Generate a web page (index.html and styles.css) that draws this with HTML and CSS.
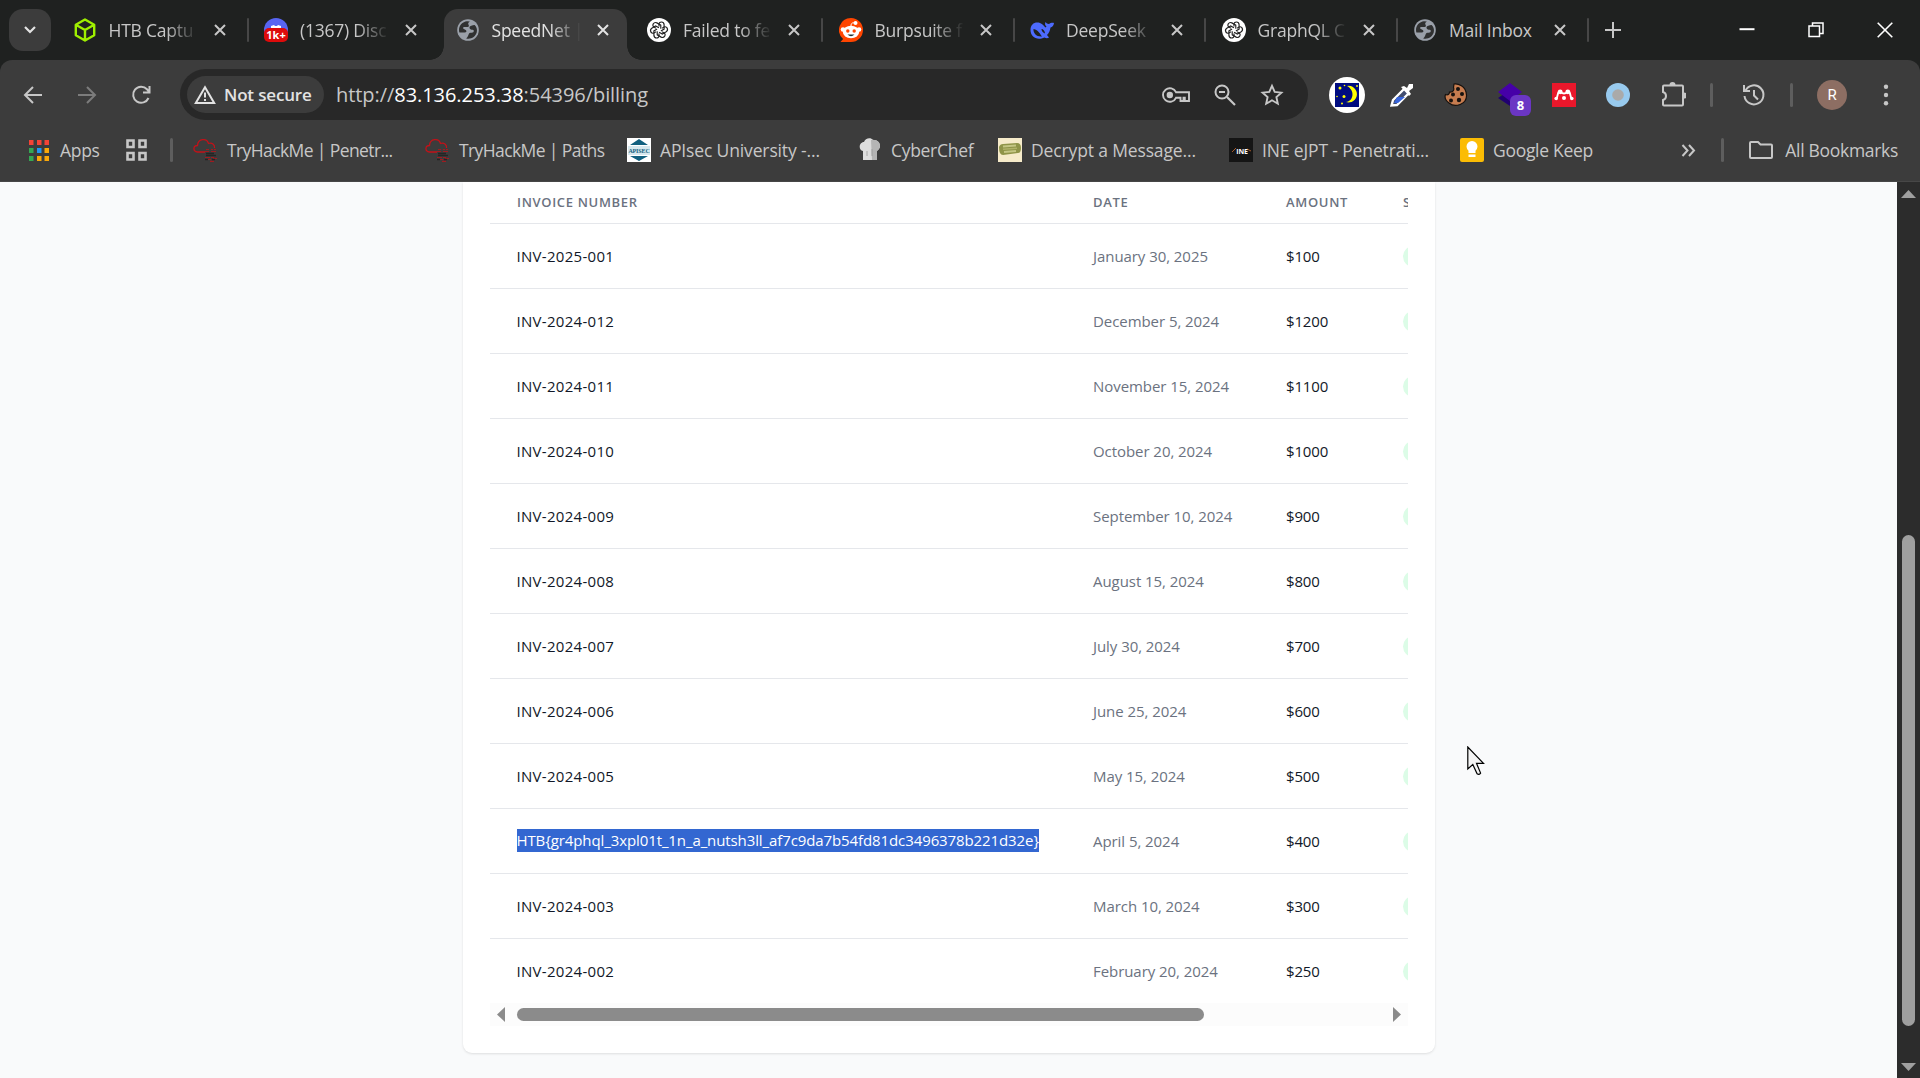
FILE: index.html
```html
<!DOCTYPE html>
<html lang="en">
<head>
<meta charset="utf-8">
<title>SpeedNet Billing</title>
<link rel="stylesheet" href="styles.css">
</head>
<body>
<svg width="0" height="0" class="defs" aria-hidden="true">
  <symbol id="close" viewBox="0 0 12 12"><path d="M1 1 11 11M11 1 1 11" fill="none" stroke="currentColor" stroke-width="2"/></symbol>
  <symbol id="globe" viewBox="0 0 22 22"><circle cx="11" cy="11" r="10.8" fill="#9aa0a9"/><path d="M10 2.2C5.5 2.6 2 6.400 2 11c0 1 .1 1.800.4 2.500h5.300c1.800 0 2.300-1.500 1-2.500l-2.200-1.300c-.8-.7-.4-1.800.8-1.700h3.300c1.500 0 1.500-1.200 1-2.200-.8-1.300-.5-2.300 1.300-3.400zM15 6.500c-2 .4-3 1.600-2.300 3 .5 1 1.600 1.200 3 1.200.8 0 1.300.8 1 1.800-.3 1.200-1.700 1.200-3.200 1.300-1.600.2-1.700 1.700-2.500 3.100-.3.700-1 1.600-1.800 2.500 4.600 1.200 9.500-1.700 10.600-6.200.8-3-.6-5.700-2.200-7.200-.9-.3-1.700.2-2.600.5z" fill="#303131"/></symbol>
  <symbol id="gpt" viewBox="0 0 24 24"><circle cx="12" cy="12" r="12" fill="#fff"/><g fill="none" stroke="#222" stroke-width="1.15"><path id="petal" d="M12 8.400V6.200c0-3 4.800-3 5.100.4v4.500l-3.200 1.900"/><use href="#petal" transform="rotate(60 12 12)"/><use href="#petal" transform="rotate(120 12 12)"/><use href="#petal" transform="rotate(180 12 12)"/><use href="#petal" transform="rotate(240 12 12)"/><use href="#petal" transform="rotate(300 12 12)"/></g></symbol>
  <symbol id="thm" viewBox="0 0 24 24"><path d="M12 14H4.500C-.5 13.500 0 7.500 4.500 7.500 5 0 14 0 15.500 5.500c3.500-1 6.500 1 6 4.500" fill="none" stroke="#c21219" stroke-width="1.300"/><path d="M13 11.500h3m2 0h2m1 0h2M12 13.500h4m2 0h5M15 21.500h3m2-1h4M12 19.500h5m1 0h3M17 23.300h4" stroke="#a01b20" stroke-width="1.200"/><path d="M13 15.500h8M13 17.500h10M12 21.500h3m4 0h3" stroke="#252525" stroke-width="1.500"/></symbol>
</svg>

<header class="browser">
  <div class="tabstrip">
    <div class="tab-search"><svg width="14" height="10" viewBox="0 0 14 10"><path d="M2 2l5 5 5-5" fill="none" stroke="#e3e3e3" stroke-width="2.200"/></svg></div>
    <nav class="tabs">
      <div class="tab divided"><svg class="fav" viewBox="0 0 24 24"><path d="M12 1.500 21.200 6.700v10.600L12 22.500 2.800 17.300V6.700zM2.800 6.700 12 12l9.200-5.300M12 12v10.500" fill="none" stroke="#9fef00" stroke-width="2.400" stroke-linejoin="round"/></svg><span class="label">HTB Captu</span><svg class="x"><use href="#close"/></svg></div>
      <div class="tab"><svg class="fav" viewBox="0 0 24 24"><circle cx="12" cy="12" r="12" fill="#5865f2"/><path d="M7 11V8l3-1 1 1h2l1-1 3 1v3z" fill="#fff"/><rect y="10" width="24" height="14" rx="5" fill="#dd0b0b"/><text x="12" y="21" text-anchor="middle" class="badge-text">1k+</text></svg><span class="label">(1367) Disc</span><svg class="x"><use href="#close"/></svg></div>
      <div class="tab active"><svg class="fav" viewBox="-1 -1 24 24"><use href="#globe" width="22" height="22"/></svg><span class="label">SpeedNet |</span><svg class="x"><use href="#close"/></svg></div>
      <div class="tab divided"><svg class="fav"><use href="#gpt"/></svg><span class="label">Failed to fe</span><svg class="x"><use href="#close"/></svg></div>
      <div class="tab divided"><svg class="fav" viewBox="0 0 24 24"><path d="M12 0a12 12 0 1 1 0 24H1.500l2.600-3A12 12 0 0 1 12 0z" fill="#ff4500"/><g fill="#fff"><ellipse cx="12" cy="14" rx="8.200" ry="6.200"/><circle cx="4" cy="11.500" r="2.300"/><circle cx="20" cy="11.500" r="2.300"/><circle cx="16.500" cy="5" r="2"/></g><path d="M12 8c0-3 1.500-3.500 3.500-3" fill="none" stroke="#fff" stroke-width="1"/><g fill="#ff4500"><circle cx="8.800" cy="13" r="1.700"/><circle cx="15.200" cy="13" r="1.700"/></g><path d="M8.500 16.500h7q-3.500 3.500-7 0z" fill="#233"/></svg><span class="label">Burpsuite f</span><svg class="x"><use href="#close"/></svg></div>
      <div class="tab divided"><svg class="fav" viewBox="0 0 24 24"><path d="M.5 12C.5 6 5 3.500 10 5c3 1 3.500 3 5.500 4.500l1-1c-1.700-1-1.700-3-1-4.500.8 1.400 2 1.800 3.500 2 1.200-.8 3-1.400 5-1-.3 2.500-1.500 4-3.500 4.500-.5 3-1.500 5.500-3.500 7.500l2 2.500c-1.500 1-3 .8-4.500-.1C7 23 .5 19 .5 12zm3-1c-.5 4 3 8 8.500 7.500-1.500-1.500-3.500-7-8.500-7.500zm8 0c0 2 1.500 3.500 3.500 4.500 0-2-1.500-4.500-3.500-4.500z" fill="#4d6bfe" fill-rule="evenodd"/></svg><span class="label">DeepSeek</span><svg class="x"><use href="#close"/></svg></div>
      <div class="tab divided"><svg class="fav"><use href="#gpt"/></svg><span class="label">GraphQL C</span><svg class="x"><use href="#close"/></svg></div>
      <div class="tab divided"><svg class="fav" viewBox="-1 -1 24 24"><use href="#globe" width="22" height="22"/></svg><span class="label whole">Mail Inbox</span><svg class="x"><use href="#close"/></svg></div>
    </nav>
    <svg class="new-tab" viewBox="0 0 16 16"><path d="M8 0v16M0 8h16" stroke="#c7c7c7" stroke-width="2"/></svg>
    <div class="window-controls">
      <svg width="16" height="16" viewBox="0 0 16 16"><path d="M.5 7.200h15" stroke="#fff" stroke-width="2"/></svg>
      <svg width="16" height="16" viewBox="0 0 16 16"><path d="M1 4h10.500v10.500H1zM4.500 4V1H15v10.500h-3.500" fill="none" stroke="#fff" stroke-width="1.500"/></svg>
      <svg width="16" height="16" viewBox="0 0 16 16"><path d="M.7.700l14.600 14.600M15.300.7.700 15.300" stroke="#fff" stroke-width="1.600"/></svg>
    </div>
  </div>

  <div class="toolbar">
    <div class="nav-buttons">
      <svg width="20" height="20" viewBox="0 0 20 20"><path d="M19 10H2M10 2 2 10l8 8" fill="none" stroke="#c7c7c7" stroke-width="2"/></svg>
      <svg width="20" height="20" viewBox="0 0 20 20"><path d="M1 10h17M10 2l8 8-8 8" fill="none" stroke="#7c7c7c" stroke-width="2"/></svg>
      <svg width="20" height="20" viewBox="0 0 20 20"><path d="M17.500 13A8 8 0 1 1 16 4.300L18 6.500M18.500 1v6.500H12" fill="none" stroke="#c7c7c7" stroke-width="2"/></svg>
    </div>
    <div class="omnibox">
      <div class="security"><svg width="22" height="20" viewBox="0 0 22 20"><path d="M11 2.200 20.200 18H1.800z" fill="none" stroke="#e3e3e3" stroke-width="2"/><path d="M11 7.500v5M11 14v2" stroke="#e3e3e3" stroke-width="2"/></svg><span>Not secure</span></div>
      <div class="url">http://<b>83.136.253.38</b>:54396/billing</div>
      <div class="page-actions">
        <svg width="28" height="18" viewBox="0 0 28 18"><path d="M14 6.200A6.800 6.800 0 1 0 14 11.800h4.500V15h3v-3.200h1.300V15H27V6.200z" fill="none" stroke="#c7c7c7" stroke-width="1.900"/><circle cx="7.800" cy="9" r="3.200" fill="#c7c7c7"/></svg>
        <svg width="22" height="22" viewBox="0 0 22 22"><circle cx="8" cy="8" r="6.500" fill="none" stroke="#c7c7c7" stroke-width="2"/><path d="M5 8h6M13 13l8 8" stroke="#c7c7c7" stroke-width="2.200"/></svg>
        <svg width="24" height="24" viewBox="0 0 24 24"><path d="M12 2.800l2.700 6.100 6.700.7-5 4.500 1.400 6.600L12 17.300l-5.800 3.400 1.400-6.600-5-4.500 6.700-.7z" fill="none" stroke="#c7c7c7" stroke-width="1.900"/></svg>
      </div>
    </div>
    <div class="extensions">
      <svg class="moon" viewBox="0 0 36 36"><circle cx="18" cy="18" r="18" fill="#fff"/><path d="M6 6h24v24H6z" fill="#000c80"/><path d="M18 9a8.300 8.300 0 1 1-1 16c8-1 9-12 1-16z" fill="#ff0"/><g fill="#ff0"><circle cx="11" cy="11" r="1.500"/><circle cx="15.500" cy="8.500" r=".8"/><circle cx="15" cy="19.500" r="1.500"/><circle cx="8" cy="19.500" r=".8"/><circle cx="13" cy="26.500" r="1"/><circle cx="28" cy="9" r=".9"/></g></svg>
      <svg viewBox="0 0 24 24"><path d="M14 6 3 17l-1.500 5.500L7 22 18 11" fill="#424d70" stroke="#fff" stroke-width="2.400"/><path d="M7 14h8l-7 6H4z" fill="#3865dc"/><path d="M11 4l3-1 3 2 2-4h4v4l-4 3 2 3-2 2z" fill="#fff"/></svg>
      <svg viewBox="0 0 24 24"><path d="M10 1c3.500-.5 12 1.500 12.500 11S11 25 5 20C1 17 .5 14 1.500 11.500c3 1 4-1 4-2.500 3.500.5 5-2 4-4.500z" fill="#c67c4f" stroke="#17120f" stroke-width="1.200"/><g fill="#17120f"><circle cx="14" cy="6" r="2"/><circle cx="9" cy="11.500" r="2"/><circle cx="18" cy="11" r="2"/><circle cx="7" cy="17.500" r="2"/><circle cx="15" cy="17" r="2.200"/></g></svg>
      <div class="stacked"><svg viewBox="0 0 24 24"><path d="M0 15 12 7l12 8-12 8z" fill="#200070"/><path d="M0 9 12 0l12 9-12 9z" fill="#4600a8"/></svg><span class="count">8</span></div>
      <svg viewBox="0 0 24 24"><path d="M0 0h24v24H0z" fill="#e9172b"/><path d="M4.200 15.500c2-1.500.8-5 2.800-7M19.800 15.500c-2-1.500-.8-5-2.800-7M8.500 9q3.500 3 7 0" fill="none" stroke="#fff" stroke-width="1.900"/><g fill="#fff"><circle cx="8.200" cy="8.800" r="2.400"/><circle cx="15.800" cy="8.800" r="2.400"/><circle cx="4.200" cy="15.500" r="1.800"/><circle cx="12" cy="15" r="2"/><circle cx="19.800" cy="15.500" r="1.800"/></g></svg>
      <svg viewBox="0 0 24 24"><circle cx="12" cy="12" r="12" fill="#98caee"/><circle cx="12" cy="12" r="5.800" fill="#aaa"/></svg>
      <svg class="puzzle" viewBox="0 0 26 26"><path d="M3 4.500q0-1 1-1h18q1 0 1 1v18q0 1-1 1H4q-1 0-1-1V18c4-1 4-7 0-8z" fill="none" stroke="#c7c7c7" stroke-width="2"/><path d="M9.500 3a3 3 0 0 1 6 0zM24 10.500a3 3 0 0 1 0 6z" fill="#c7c7c7"/></svg>
      <i class="rule"></i>
      <svg viewBox="0 0 24 24"><path d="M3.500 7.500A9.500 9.500 0 1 1 2.500 13M2 2v6h6M12 7v5.500l4 4" fill="none" stroke="#c7c7c7" stroke-width="2"/></svg>
      <i class="rule"></i>
      <div class="avatar">R</div>
      <svg class="menu" viewBox="0 0 6 24"><g fill="#c7c7c7"><circle cx="3" cy="3.700" r="2.200"/><circle cx="3" cy="12" r="2.200"/><circle cx="3" cy="20.200" r="2.200"/></g></svg>
    </div>
  </div>

  <div class="bookmarks">
    <div class="bm"><svg class="apps" viewBox="0 0 20 22"><path d="M0 1h4.500v5H0zM8 1h4.500v5H8zM15.500 1H20v5h-4.500z" fill="#f44336"/><path d="M0 9h4.500v5H0zM0 17h4.500v5H0z" fill="#34a853"/><path d="M8 9h4.500v5H8z" fill="#2196f3"/><path d="M15.500 9H20v5h-4.500zM8 17h4.500v5H8zM15.500 17H20v5h-4.500z" fill="#fba809"/></svg><span>Apps</span></div>
    <svg class="grid-icon" viewBox="0 0 21 22"><path d="M1.500 1.500h6v6.500h-6zM13.500 1.500h6v6.500h-6zM1.500 14h6v6.500h-6zM13.500 14h6v6.500h-6z" fill="none" stroke="#c7c7c7" stroke-width="2.600"/></svg>
    <i class="rule"></i>
    <div class="bm tight"><svg><use href="#thm"/></svg><span>TryHackMe | Penetr...</span></div>
    <div class="bm tight"><svg><use href="#thm"/></svg><span>TryHackMe | Paths</span></div>
    <div class="bm loose"><svg viewBox="0 0 24 24"><path d="M0 0h24v24H0z" fill="#fff"/><path d="M3 7l9-6 9 6zM3 18l9 5 9-5z" fill="#12607f"/><path d="M1 8h22v9H1z" fill="#d7e8ee"/><text x="12" y="15.300" text-anchor="middle" class="apisec">APISEC</text></svg><span>APIsec University -...</span></div>
    <div class="bm"><svg viewBox="0 0 24 24"><path d="M5 22v-9C0 12 1 4 6 4c1-4 7-5 9-2 5-1 9 5 6 9l-2 2v9z" fill="#ddd"/><path d="M13 2c7-1 11 4 8 9l-2 2v9h-5z" fill="#b5b5b5"/><path d="M9 13v5M14 11v7" stroke="#999" stroke-width=".8"/></svg><span>CyberChef</span></div>
    <div class="bm loose"><svg viewBox="0 0 24 24"><path d="M0 0h24v24H0z" fill="#f6ebca"/><path d="M1 9q1-3 4-3l14-1q4 0 4 5t-3 5L5 17q-4 0-4-8z" fill="#8f9448"/><path d="M5 8.500l13-1M6 14l12-1" stroke="#c4c684" stroke-width="1.800"/><path d="M5 11.300l14-1" stroke="#b0b268" stroke-width="1.500"/></svg><span>Decrypt a Message...</span></div>
    <div class="bm loose"><svg viewBox="0 0 24 24"><path d="M0 0h24v24H0z" fill="#151515"/><path d="M3 14l4-4M18 11l4 2" stroke="#a65a2b"/><text x="13" y="15.500" text-anchor="middle" class="ine">INE</text></svg><span>INE eJPT - Penetrati...</span></div>
    <div class="bm"><svg viewBox="0 0 24 24"><rect width="24" height="24" rx="2" fill="#fbbc04"/><path d="M8.500 15v-2.300a5.500 5.500 0 1 1 7 0V15zM8.500 16.500h7V19h-7z" fill="#fff"/></svg><span>Google Keep</span></div>
    <div class="bm-end">
      <svg width="15" height="13" viewBox="0 0 15 13"><path d="M1.500 1l5 5.500-5 5.500M8 1l5 5.500L8 12" fill="none" stroke="#c7c7c7" stroke-width="2"/></svg>
      <i class="rule"></i>
      <svg width="24" height="18" viewBox="0 0 24 18"><path d="M1 2q0-1 1-1h7l2.500 2.500H22q1 0 1 1V16q0 1-1 1H2q-1 0-1-1z" fill="none" stroke="#c7c7c7" stroke-width="2"/></svg>
      <span>All Bookmarks</span>
    </div>
  </div>
</header>

<div class="viewport">
  <main class="page">
    <section class="card">
      <div class="table-wrap">
        <table>
          <thead><tr><th>Invoice Number</th><th>Date</th><th>Amount</th><th>Status</th></tr></thead>
          <tbody>
            <tr><td>INV-2025-001</td><td>January 30, 2025</td><td>$100</td><td><span class="pill"></span></td></tr>
            <tr><td>INV-2024-012</td><td>December 5, 2024</td><td>$1200</td><td><span class="pill"></span></td></tr>
            <tr><td>INV-2024-011</td><td>November 15, 2024</td><td>$1100</td><td><span class="pill"></span></td></tr>
            <tr><td>INV-2024-010</td><td>October 20, 2024</td><td>$1000</td><td><span class="pill"></span></td></tr>
            <tr><td>INV-2024-009</td><td>September 10, 2024</td><td>$900</td><td><span class="pill"></span></td></tr>
            <tr><td>INV-2024-008</td><td>August 15, 2024</td><td>$800</td><td><span class="pill"></span></td></tr>
            <tr><td>INV-2024-007</td><td>July 30, 2024</td><td>$700</td><td><span class="pill"></span></td></tr>
            <tr><td>INV-2024-006</td><td>June 25, 2024</td><td>$600</td><td><span class="pill"></span></td></tr>
            <tr><td>INV-2024-005</td><td>May 15, 2024</td><td>$500</td><td><span class="pill"></span></td></tr>
            <tr><td><span class="selected">HTB{gr4phql_3xpl01t_1n_a_nutsh3ll_af7c9da7b54fd81dc3496378b221d32e}</span></td><td>April 5, 2024</td><td>$400</td><td><span class="pill"></span></td></tr>
            <tr><td>INV-2024-003</td><td>March 10, 2024</td><td>$300</td><td><span class="pill"></span></td></tr>
            <tr><td>INV-2024-002</td><td>February 20, 2024</td><td>$250</td><td><span class="pill"></span></td></tr>
          </tbody>
        </table>
      </div>
      <div class="hscroll">
        <svg width="8" height="15" viewBox="0 0 8 15"><path d="M8 0v15L0 7.500z" fill="#8b8b8b"/></svg>
        <div class="hthumb"></div>
        <svg width="8" height="15" viewBox="0 0 8 15"><path d="M0 0v15l8-7.500z" fill="#8b8b8b"/></svg>
      </div>
    </section>
  </main>
  <aside class="vscroll">
    <svg width="15" height="8" viewBox="0 0 15 8"><path d="M0 8h15L7.500 0z" fill="#9f9f9f"/></svg>
    <div class="vthumb"></div>
    <svg width="15" height="8" viewBox="0 0 15 8"><path d="M0 0h15L7.500 8z" fill="#9f9f9f"/></svg>
  </aside>
</div>
<svg class="cursor" viewBox="0 0 18 30"><path d="M.8 1v22l5-4.500 4.300 9.300q2 1.500 3.500-.7L9.500 17.300h7z" fill="#f4f4f4" stroke="#000" stroke-width="1.200"/></svg>
</body>
</html>
```
FILE: styles.css
```css
* { box-sizing: border-box; }
body {
  margin: 0;
  height: 1078px;
  overflow: hidden;
  display: flex;
  flex-direction: column;
  font-family: "Open Sans", "Noto Sans", sans-serif;
}
svg { display: block; flex: none; }
.defs { position: absolute; }

/* Browser chrome */
.browser {
  flex: none;
  height: 182px;
  background: #1f2120;
  color: #c7c7c7;
  font-size: 17.500px;
}
.tabstrip { height: 60px; display: flex; align-items: center; padding-left: 9px; }
.tab-search {
  width: 42px;
  height: 42px;
  border-radius: 14px;
  background: #3c3c3c;
  display: flex;
  align-items: center;
  justify-content: center;
}
.tabs { display: flex; align-self: stretch; padding: 9px 0 0 5px; }
.tab {
  width: 191.500px;
  height: 51px;
  padding: 0 22px 9px 16px;
  display: flex;
  align-items: center;
  position: relative;
}
.tab.divided::after {
  content: "";
  position: absolute;
  right: -1px;
  top: 9px;
  width: 2px;
  height: 24px;
  border-radius: 1px;
  background: #474747;
}
.fav { width: 24px; height: 24px; margin-left: .5px; }
.label {
  width: 92px;
  margin-left: 12px;
  white-space: nowrap;
  line-height: 28px;
  letter-spacing: -0.22px;
  -webkit-mask-image: linear-gradient(90deg, #000 62%, transparent 97%);
  mask-image: linear-gradient(90deg, #000 62%, transparent 97%);
}
.label.whole { -webkit-mask-image: none; mask-image: none; }
.x { width: 12px; height: 12px; margin-left: auto; }
.tab.active { color: #e3e3e3; }
.tab.active::before {
  content: "";
  position: absolute;
  z-index: 0;
  inset: 0 4px 0 5px;
  border-radius: 14px 14px 0 0;
  background: #3c3c3c;
}
.tab.active::after {
  content: "";
  position: absolute;
  left: -9px;
  right: -10px;
  bottom: 0;
  height: 14px;
  background:
    radial-gradient(circle at 0 0, transparent 13.500px, #3c3c3c 14px) left / 14px 14px no-repeat,
    radial-gradient(circle at 100% 0, transparent 13.500px, #3c3c3c 14px) right / 14px 14px no-repeat;
}
.tab.active > * { position: relative; z-index: 1; }
.badge-text { font: 700 11px "Open Sans", sans-serif; fill: #fff; }
.new-tab { width: 16px; height: 16px; margin-left: 17px; }
.window-controls { margin-left: auto; display: flex; gap: 53px; padding-right: 27px; }

.toolbar {
  height: 69px;
  padding: 9px 0 9px 23px;
  display: flex;
  align-items: center;
  background: #3c3c3c;
  border-radius: 12px 12px 0 0;
}
.nav-buttons { width: 157px; display: flex; gap: 34px; }
.omnibox {
  width: 1128px;
  height: 51px;
  border-radius: 26px;
  background: #282828;
  display: flex;
  align-items: center;
  padding: 0 24px 0 7px;
}
.security {
  width: 137px;
  height: 37px;
  border-radius: 19px;
  background: #3c3c3c;
  color: #e3e3e3;
  display: flex;
  align-items: center;
  gap: 8px;
  padding-left: 7px;
  font-size: 17px;
  font-weight: 600;
  white-space: nowrap;
  letter-spacing: -0.17px;
}
.url { margin-left: 12px; font-size: 20px; letter-spacing: -0.06px; white-space: nowrap; }
.url b { font-weight: 400; color: #fff; }
.page-actions { margin-left: auto; display: flex; align-items: center; gap: 24px; }
.extensions {
  margin-left: 21px;
  flex: 1;
  display: flex;
  align-items: center;
  gap: 30px;
}
.extensions > svg, .stacked svg { width: 24px; height: 24px; }
.extensions > .moon { width: 36px; height: 36px; margin-right: -5px; }
.stacked { position: relative; width: 24px; }
.count {
  position: absolute;
  left: 12px;
  top: 12px;
  width: 21px;
  height: 21px;
  border-radius: 6px;
  background: #6b36c4;
  color: #fff;
  font: 700 13px/21px "Open Sans", sans-serif;
  text-align: center;
}
.extensions > .puzzle { width: 26px; height: 26px; }
.rule { width: 3px; height: 24px; border-radius: 2px; background: #5e5e5e; flex: none; }
.extensions .rule { margin-left: -6px; }
.extensions svg + .rule { margin-right: -1px; }
.avatar {
  width: 30px;
  height: 30px;
  margin-left: -5px;
  border-radius: 50%;
  background: #8d6e63;
  color: #fff;
  font: 15px/30px Roboto, sans-serif;
  text-align: center;
}
.extensions > .menu { width: 6px; margin-left: 6px; }

.bookmarks {
  height: 53px;
  display: grid;
  grid-template-columns: 98px 44px 23px 232px 202px 231px 140px 231px 231px 170px 1fr;
  align-items: center;
  padding: 0 22px 10px 28px;
  background: #3c3c3c;
  border-bottom: 1px solid #474747;
  white-space: nowrap;
  letter-spacing: -0.3px;
}
.bookmarks span { margin-top: -1px; }
.bm { display: flex; align-items: center; gap: 9px; }
.bm.tight { letter-spacing: -0.6px; }
.bm.tight span { margin-left: 1px; }
.bm.loose { letter-spacing: -0.14px; }
.bm svg { width: 24px; height: 24px; }
.bm .apps { width: 20px; height: 22px; margin: 0 2px 0 1px; }
.grid-icon { width: 21px; height: 22px; }
.bm-end { display: flex; align-items: center; justify-content: flex-end; }
.bm-end .rule { margin: 0 25px 0 25px; }
.bm-end span { margin-left: 12px; }
.apisec { font: 700 6px "Liberation Serif", serif; fill: #12607f; }
.ine { font: 700 7px "Open Sans", sans-serif; fill: #fff; }

/* Billing page */
.viewport { flex: 1; display: flex; min-height: 0; }
.page { flex: 1; background: #f9fafb; padding-left: 463px; }
.card {
  width: 972px;
  height: 871px;
  padding: 0 27px;
  background: #fff;
  border-radius: 0 0 9px 9px;
  box-shadow: 0 1px 3px rgba(0, 0, 0, .08), 0 1px 2px rgba(0, 0, 0, .04);
}
.table-wrap { height: 821px; overflow: hidden; }
table { width: 1140px; border-collapse: collapse; table-layout: fixed; }
th, td { text-align: left; padding: 0 0 0 27px; white-space: nowrap; }
th:nth-child(1) { width: 576px; }
th:nth-child(2) { width: 193px; }
th:nth-child(3) { width: 117px; }
th {
  height: 41px;
  font-size: 13px;
  font-weight: 600;
  letter-spacing: .68px;
  text-transform: uppercase;
  color: #6b7280;
}
td { height: 65px; border-top: 1px solid #e5e7eb; font-size: 15px; letter-spacing: -0.15px; color: #111827; }
td:nth-child(1) { padding-left: 26.500px; letter-spacing: .3px; }
td:nth-child(2) { color: #6b7280; letter-spacing: -0.06px; }
.selected {
  display: inline-block;
  height: 23px;
  line-height: 22px;
  background: #3367d1;
  color: #fff;
  letter-spacing: -0.1px;
  vertical-align: middle;
}
.pill { display: block; width: 52px; height: 21px; margin-top: 1px; border-radius: 11px; background: #dcfce7; }
.hscroll {
  height: 23px;
  padding: 0 7px;
  display: flex;
  align-items: center;
  background: #fcfcfc;
}
.hthumb { width: 687px; height: 13px; margin: 0 auto 0 12px; border-radius: 7px; background: #8b8b8b; }
.vscroll {
  width: 23px;
  padding: 8px 0 7px;
  display: flex;
  flex-direction: column;
  align-items: center;
  background: #2c2c2c;
}
.vthumb { width: 13px; height: 491px; margin: auto 0 37px; border-radius: 7px; background: #9f9f9f; }
.cursor { position: absolute; left: 1467px; top: 746px; width: 18px; height: 30px; }
```
